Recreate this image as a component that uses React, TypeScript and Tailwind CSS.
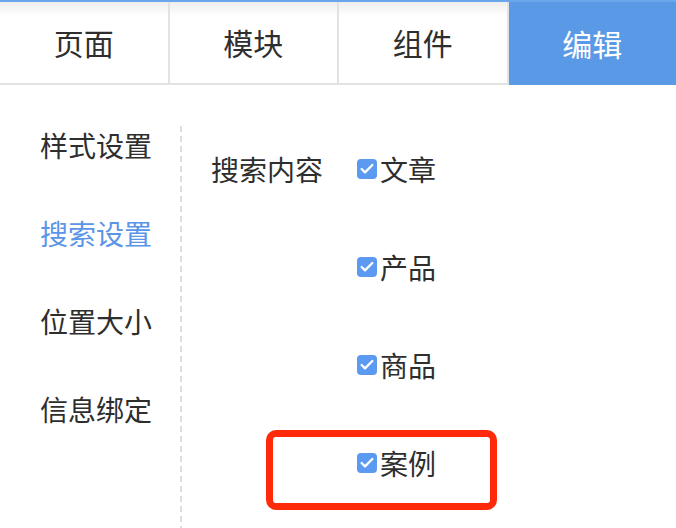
import { Check } from "lucide-react";

const tabs = ["页面", "模块", "组件", "编辑"];
const menu = ["样式设置", "搜索设置", "位置大小", "信息绑定"];
const options = ["文章", "产品", "商品", "案例"];

function CheckBox() {
  return (
    <span className="flex h-[20px] w-[20px] shrink-0 items-center justify-center rounded-[4px] bg-[#5b9af0]">
      <Check className="h-[16px] w-[16px] text-white" strokeWidth={3.5} />
    </span>
  );
}

export default function App() {
  return (
    <div className="flex h-[528px] w-[676px] flex-col overflow-hidden bg-white font-['Noto_Sans_CJK_SC',sans-serif] text-[#2e2e2e]">
      <div className="h-[2px] shrink-0 bg-[#6aa6ea]" />
      <nav className="flex h-[83px] shrink-0">
        {tabs.map((t, i) => {
          const active = i === tabs.length - 1;
          return (
            <div
              key={t}
              className={
                active
                  ? "flex flex-1 items-center justify-center bg-[#5a99e6] text-[30px] text-white"
                  : "flex flex-1 items-center justify-center border-r-2 border-b-2 border-[#e2e2e2] bg-gradient-to-b from-[#eeeeee] to-white to-[18%] text-[30px]"
              }
            >
              {t}
            </div>
          );
        })}
      </nav>

      <div className="flex flex-1">
        <ul className="flex w-[180px] flex-col gap-[48px] pl-[12px] pt-[40px]">
          {menu.map((m, i) => (
            <li
              key={m}
              className={
                i === 1
                  ? "text-center text-[28px] leading-[40px] text-[#5b95e8]"
                  : "text-center text-[28px] leading-[40px]"
              }
            >
              {m}
            </li>
          ))}
        </ul>

        <div className="mt-[41px] w-[2px] bg-[repeating-linear-gradient(to_bottom,#dddddd_0_6px,transparent_6px_10px)]" />

        <div className="flex pl-[29px] pt-[64px]">
          <div className="w-[146px] text-[28px] leading-[40px]">搜索内容</div>
          <div className="flex flex-col gap-[58px]">
            {options.map((o, i) => (
              <div key={o} className="relative flex h-[40px] items-center gap-[3px] text-[28px]">
                <CheckBox />
                <span className="leading-[40px]">{o}</span>
                {i === options.length - 1 && (
                  <div className="absolute left-[-91px] top-[-13px] h-[80px] w-[231px] rounded-[10px] border-[7px] border-[#ff2a0a]" />
                )}
              </div>
            ))}
          </div>
        </div>
      </div>
    </div>
  );
}
